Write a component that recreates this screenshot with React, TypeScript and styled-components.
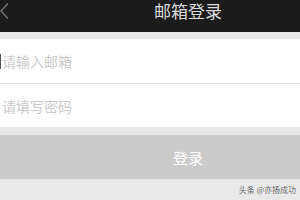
import React from "react";
import styled, { createGlobalStyle } from "styled-components";

const GlobalStyle = createGlobalStyle`
  html, body {
    margin: 0;
    padding: 0;
    background: #e9e9e9;
    font-family: "Noto Sans CJK SC", "Noto Sans", sans-serif;
  }
  * { box-sizing: border-box; }
`;

const Page = styled.div`
  width: 300px;
  height: 200px;
  overflow: hidden;
  display: flex;
  flex-direction: column;
  background: #e9e9e9;
`;

const Header = styled.header`
  height: 32px;
  background: #1b1b1b;
  display: flex;
  align-items: flex-start;
  padding-top: 2px;
`;

const Back = styled.button`
  width: 10px;
  height: 18px;
  padding: 0;
  border: none;
  background: none;
  display: flex;
  align-items: center;
`;

const Title = styled.h1`
  margin: 0 0 0 144px;
  font-size: 17px;
  line-height: 18px;
  font-weight: 400;
  color: #dedede;
`;

const Form = styled.div`
  margin-top: 7px;
  background: #fff;
  display: flex;
  flex-direction: column;
`;

const Row = styled.div<{ $last?: boolean }>`
  height: ${(p) => (p.$last ? "43px" : "45px")};
  display: flex;
  align-items: center;
  border-bottom: ${(p) => (p.$last ? "none" : "1px solid #e3e3e3")};
  position: relative;
`;

const Caret = styled.span`
  position: absolute;
  left: 0;
  top: 15px;
  width: 1px;
  height: 15px;
  background: #555;
`;

const Input = styled.input`
  width: 100%;
  height: 100%;
  border: none;
  outline: none;
  padding: 0 0 0 2px;
  font-family: inherit;
  font-size: 14px;
  color: #333;
  background: transparent;
  &::placeholder {
    color: #cacaca;
  }
`;

const Submit = styled.button`
  margin-top: 8px;
  height: 44px;
  width: 100%;
  border: none;
  background: #cbcbcb;
  color: #fff;
  font-family: inherit;
  font-size: 15px;
  padding: 0 0 0 76px;
`;

const Footer = styled.div`
  flex: 1;
  display: flex;
  justify-content: flex-end;
  align-items: center;
  padding: 0 4px 0 0;
`;

const Watermark = styled.span`
  font-size: 8px;
  color: #555;
  text-shadow: 0 0 1px #fff, 0 0 1px #fff;
`;

export default function App() {
  return (
    <>
      <GlobalStyle />
      <Page>
        <Header>
          <Back aria-label="返回">
            <svg width="9" height="16" viewBox="0 0 9 16">
              <path d="M8 0.5 L0.8 8 L8 15.5" fill="none" stroke="#7a7a7a" strokeWidth="1.3" />
            </svg>
          </Back>
          <Title>邮箱登录</Title>
        </Header>
        <Form>
          <Row>
            <Caret />
            <Input placeholder="请输入邮箱" />
          </Row>
          <Row $last>
            <Input type="password" placeholder="请填写密码" />
          </Row>
        </Form>
        <Submit>登录</Submit>
        <Footer>
          <Watermark>头条 @亦扬成功</Watermark>
        </Footer>
      </Page>
    </>
  );
}
